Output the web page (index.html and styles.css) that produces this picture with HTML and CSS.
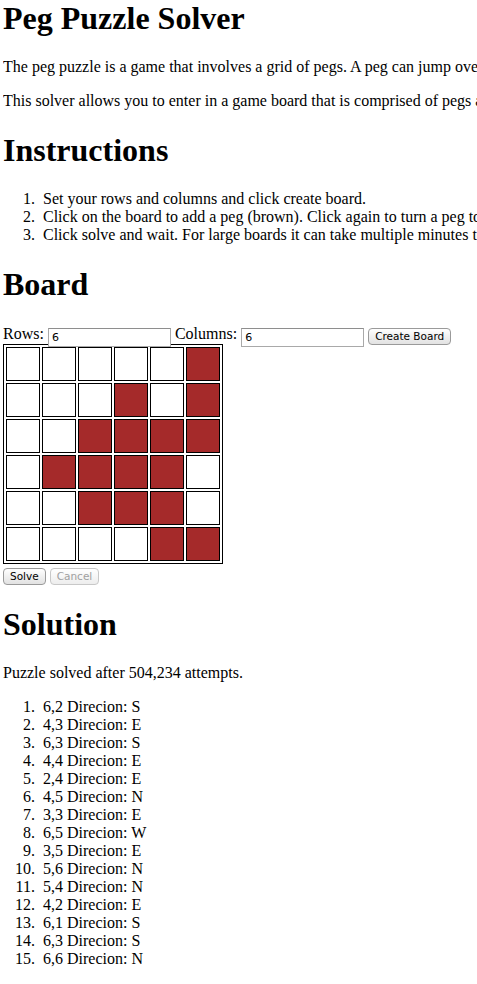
FILE: index.html
```html
<!DOCTYPE html>
<html>
<head>
<meta charset="utf-8">
<title>Peg Puzzle Solver</title>
<link rel="stylesheet" href="styles.css">
</head>
<body>
<h1 class="title">Peg Puzzle Solver</h1>
<p class="nowrap">The peg puzzle is a game that involves a grid of pegs. A peg can jump over an adjacent peg into an empty hole, removing the jumped peg.</p>
<p class="nowrap">This solver allows you to enter in a game board that is comprised of pegs and holes and it will find a solution.</p>
<h1>Instructions</h1>
<ol class="nowrap">
  <li>Set your rows and columns and click create board.</li>
  <li>Click on the board to add a peg (brown). Click again to turn a peg to a hole.</li>
  <li>Click solve and wait. For large boards it can take multiple minutes to find a solution.</li>
</ol>
<h1>Board</h1>
<div class="controls">Rows: <input class="field" type="text" value="6"> Columns: <input class="field" type="text" value="6"> <button class="btn">Create Board</button></div>
<table class="board">
  <tr><td></td><td></td><td></td><td></td><td></td><td class="peg"></td></tr>
  <tr><td></td><td></td><td></td><td class="peg"></td><td></td><td class="peg"></td></tr>
  <tr><td></td><td></td><td class="peg"></td><td class="peg"></td><td class="peg"></td><td class="peg"></td></tr>
  <tr><td></td><td class="peg"></td><td class="peg"></td><td class="peg"></td><td class="peg"></td><td></td></tr>
  <tr><td></td><td></td><td class="peg"></td><td class="peg"></td><td class="peg"></td><td></td></tr>
  <tr><td></td><td></td><td></td><td></td><td class="peg"></td><td class="peg"></td></tr>
</table>
<div class="actions"><button class="btn">Solve</button> <button class="btn" disabled>Cancel</button></div>
<h1>Solution</h1>
<p>Puzzle solved after 504,234 attempts.</p>
<ol class="moves">
  <li>6,2 Direcion: S</li>
  <li>4,3 Direcion: E</li>
  <li>6,3 Direcion: S</li>
  <li>4,4 Direcion: E</li>
  <li>2,4 Direcion: E</li>
  <li>4,5 Direcion: N</li>
  <li>3,3 Direcion: E</li>
  <li>6,5 Direcion: W</li>
  <li>3,5 Direcion: E</li>
  <li>5,6 Direcion: N</li>
  <li>5,4 Direcion: N</li>
  <li>4,2 Direcion: E</li>
  <li>6,1 Direcion: S</li>
  <li>6,3 Direcion: S</li>
  <li>6,6 Direcion: N</li>
</ol>
</body>
</html>
```
FILE: styles.css
```css
html {
  overflow: hidden;
  background: #fff;
}
body {
  margin: 0 0 0 3px;
  font-family: "Liberation Serif", "Times New Roman", serif;
  font-size: 16px;
  color: #000;
}
.title {
  margin-top: 0;
}
.nowrap {
  white-space: nowrap;
}
li::marker {
  content: counter(list-item) ".\00a0\00a0";
}
.controls {
  height: 20px;
  line-height: 20px;
}
.field {
  box-sizing: border-box;
  width: 123px;
  height: 19px;
  margin: 0;
  padding: 1px 3px;
  border: 1px solid #a9a9a9;
  border-top-color: #8e8e8e;
  font-family: "DejaVu Sans", sans-serif;
  font-size: 11px;
  vertical-align: -2px;
  color: #000;
}
.btn {
  box-sizing: border-box;
  height: 17px;
  margin: 0;
  padding: 0 6px;
  border: 1px solid #9a9a9a;
  border-radius: 4px;
  background: linear-gradient(#ffffff, #f0f0f0 50%, #e2e2e2);
  font-family: "DejaVu Sans", sans-serif;
  font-size: 10.5px;
  line-height: 15px;
  color: #000;
  vertical-align: -1px;
}
.btn:disabled {
  color: #a0a0a0;
  border-color: #c8c8c8;
  background: linear-gradient(#ffffff, #f6f6f6 50%, #ededed);
}
.board {
  border: 1px solid #000;
  border-spacing: 2px;
}
.board td {
  width: 32px;
  height: 32px;
  padding: 0;
  border: 1px solid #000;
  background: #fff;
}
.board td.peg {
  background: #a52a2a;
}
.actions {
  height: 20px;
  padding-top: 1px;
  box-sizing: border-box;
}
.moves {
  margin-top: 16px;
}
```
